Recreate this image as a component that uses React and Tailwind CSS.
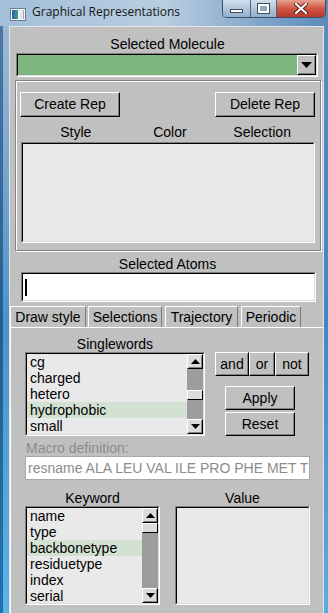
import React from "react";

const singlewords = ["cg", "charged", "hetero", "hydrophobic", "small"];
const keywords = ["name", "type", "backbonetype", "residuetype", "index", "serial"];

function Raised({ className = "", children }) {
  return (
    <div className={`border border-t-white border-l-white border-b-black border-r-black bg-[#c0c0c0] ${className}`}>
      <div className="w-full h-full border border-t-transparent border-l-transparent border-b-[#808080] border-r-[#808080] flex items-center justify-center">
        {children}
      </div>
    </div>
  );
}

function Sunken({ className = "", inner = "", children }) {
  return (
    <div className={`border border-t-[#808080] border-l-[#808080] border-b-white border-r-white ${className}`}>
      <div className={`w-full h-full border border-t-black border-l-black border-b-[#dcdcdc] border-r-[#dcdcdc] ${inner}`}>
        {children}
      </div>
    </div>
  );
}

function Arrow({ up, className = "" }) {
  return (
    <div className={`border border-t-white border-l-white border-b-black border-r-black bg-[#dcdcdc] ${className}`}>
      <div className="w-full h-full border border-t-transparent border-l-transparent border-b-[#808080] border-r-[#808080] flex items-center justify-center">
        <svg width="9" height="5" viewBox="0 0 9 5">
          {up ? <polygon points="0,5 9,5 4.5,0" fill="#000" /> : <polygon points="0,0 9,0 4.5,5" fill="#000" />}
        </svg>
      </div>
    </div>
  );
}

function Scrollbar({ before, after }) {
  return (
    <div className="w-[16px] h-full flex flex-col bg-[#9d9d9d]">
      <Arrow up className="h-[15px]" />
      <div style={{ height: before }} />
      <div className="h-[10px] border border-t-white border-l-white border-b-black border-r-black bg-[#dcdcdc]" />
      <div className="flex-1" style={{ minHeight: after }} />
      <Arrow className="h-[15px]" />
    </div>
  );
}

function ListBox({ items, selected, className, before }) {
  return (
    <Sunken className={className} inner="bg-[#e9e9e9] flex overflow-hidden">
      <div className="flex-1 flex flex-col">
        {items.map((it) => (
          <div
            key={it}
            className={`h-[16px] leading-[16px] pl-[3px] text-[14px] text-black ${it === selected ? "bg-[#d3e1d3]" : ""}`}
          >
            {it}
          </div>
        ))}
      </div>
      <Scrollbar before={before} />
    </Sunken>
  );
}

export default function App() {
  return (
    <div className="w-[328px] h-[613px] overflow-hidden flex flex-col bg-gradient-to-r from-[#a3bfda] via-[#b9cde1] to-[#5a8bbb] font-['Liberation_Sans',Arial,sans-serif]">
      {/* title bar */}
      <div className="h-[26px] flex items-start shrink-0">
        <svg className="mt-[8px] ml-[10px]" width="16" height="13" viewBox="0 0 16 13">
          <rect x="0.5" y="0.5" width="15" height="12" fill="#f4f4f4" stroke="#6b7f93" />
          <rect x="2" y="2" width="6" height="9" fill="#3f8f8c" />
          <rect x="2" y="2" width="3" height="9" fill="#2f6ea8" />
          <rect x="9" y="2" width="5" height="9" fill="#e4e9ee" />
          <rect x="13" y="2" width="1" height="9" fill="#9aa8b5" />
        </svg>
        <span className="ml-[6px] mt-[4px] leading-[16px] text-[12px] text-[#161616] font-['Open_Sans',sans-serif]">
          Graphical Representations
        </span>
        <div className="ml-auto mr-[2px] flex h-[18px] rounded-b-[5px] border border-t-0 border-[#3a4f6b] overflow-hidden">
          <div className="w-[28px] h-full bg-gradient-to-b from-[#d2dfec] to-[#93afcb] border-r border-[#4d6584] flex items-end justify-center pb-[4px]">
            <div className="w-[13px] h-[4px] bg-white border border-[#3b4b60]" />
          </div>
          <div className="w-[26px] h-full bg-gradient-to-b from-[#d2dfec] to-[#93afcb] border-r border-[#4d6584] flex items-center justify-center">
            <div className="w-[11px] h-[9px] border-[2px] border-white outline outline-1 outline-[#3b4b60] bg-[#8fa8c2]" />
          </div>
          <div className="w-[48px] h-full bg-gradient-to-b from-[#e6a192] via-[#cf5642] to-[#b9382a] flex items-center justify-center">
            <svg width="14" height="11" viewBox="0 0 14 11">
              <path d="M2 1 L12 10 M12 1 L2 10" stroke="#5a1a12" strokeWidth="4" strokeLinecap="round" />
              <path d="M2 1 L12 10 M12 1 L2 10" stroke="#fff" strokeWidth="2.2" strokeLinecap="round" />
            </svg>
          </div>
        </div>
      </div>

      <div className="flex-1 flex">
        {/* left frame */}
        <div className="w-[9px] flex shrink-0">
          <div className="w-[3px] bg-gradient-to-b from-[#4f77a3] via-[#1f5f93] to-[#1d74b0]" />
          <div className="w-[6px] bg-gradient-to-b from-[#9cb9d6] via-[#4f93c8] to-[#5fb2e3]" />
        </div>

        {/* content */}
        <div className="w-[314px] bg-[#c0c0c0] border-t border-l border-[#e4e4e4] flex flex-col text-[14px] text-black">
          <div className="mt-[9px] h-[16px] leading-[16px] text-center pl-[2px]">Selected Molecule</div>

          <Sunken className="mt-[1px] ml-[6px] w-[302px] h-[24px]" inner="bg-[#7fb67f] flex justify-end">
            <Raised className="w-[19px] h-full">
              <svg width="11" height="6" viewBox="0 0 11 6">
                <polygon points="0,0 11,0 5.5,6" fill="#000" />
              </svg>
            </Raised>
          </Sunken>

          {/* reps frame */}
          <div className="mt-[3px] ml-[5px] w-[306px] h-[171px] border border-[#858585] shadow-[inset_1px_1px_0_#fff,1px_1px_0_#fff] flex flex-col">
            <div className="mt-[11px] flex justify-between pl-[4px] pr-[5px]">
              <Raised className="w-[100px] h-[25px]">Create Rep</Raised>
              <Raised className="w-[100px] h-[25px]">Delete Rep</Raised>
            </div>
            <div className="mt-[7px] h-[16px] leading-[16px] flex">
              <span className="w-[122px] text-center">Style</span>
              <span className="w-[70px] text-center">Color</span>
              <span className="w-[118px] text-center">Selection</span>
            </div>
            <Sunken className="mt-[2px] ml-[5px] w-[294px] h-[101px]" inner="bg-[#e9e9e9]" />
          </div>

          <div className="mt-[5px] h-[16px] leading-[16px] text-center pl-[2px]">Selected Atoms</div>
          <Sunken className="ml-[11px] w-[295px] h-[30px]" inner="bg-white flex items-center pl-[2px]">
            <div className="w-[2px] h-[17px] bg-black" />
          </Sunken>

          {/* tabs */}
          <div className="mt-[4px] h-[21px] flex">
            {[
              ["Draw style", "w-[76px]", ""],
              ["Selections", "w-[74px]", "ml-[2px]"],
              ["Trajectory", "w-[73px]", "ml-[3px]"],
              ["Periodic", "w-[60px]", "ml-[3px]"],
            ].map(([t, w, m]) => (
              <div
                key={t}
                className={`${w} ${m} h-full border-t border-l border-r border-t-white border-l-white border-r-[#7a7a7a] flex items-center justify-center leading-[16px]`}
              >
                {t}
              </div>
            ))}
          </div>

          {/* selections panel */}
          <div className="flex-1 border-t border-l border-white flex flex-col">
            <div className="flex">
              <div className="ml-[14px] w-[180px] flex flex-col">
                <div className="mt-[8px] h-[16px] leading-[16px] text-center">Singlewords</div>
                <ListBox items={singlewords} selected="hydrophobic" className="h-[84px] w-[180px]" before={21} />
              </div>
              <div className="ml-[10px] mt-[24px] flex flex-col">
                <div className="flex h-[24px]">
                  <Raised className="w-[34px] h-full">and</Raised>
                  <Raised className="w-[26px] h-full">or</Raised>
                  <Raised className="w-[34px] h-full">not</Raised>
                </div>
                <Raised className="mt-[10px] ml-[10px] w-[70px] h-[24px]">Apply</Raised>
                <Raised className="mt-[2px] ml-[10px] w-[70px] h-[24px]">Reset</Raised>
              </div>
            </div>

            <div className="mt-[5px] pl-[15px] h-[15px] leading-[15px] text-[#8c8c8c]">Macro definition:</div>
            <div className="ml-[14px] w-[285px] h-[24px] bg-white border border-[#a8a8a8] overflow-hidden whitespace-nowrap pl-[2px] leading-[22px] text-[#8c8c8c]">
              resname ALA LEU VAL ILE PRO PHE MET TRP
            </div>

            <div className="mt-[10px] flex">
              <div className="ml-[14px] w-[135px] flex flex-col">
                <div className="h-[16px] leading-[16px] text-center">Keyword</div>
                <ListBox items={keywords} selected="backbonetype" className="h-[99px] w-[135px]" before={0} />
              </div>
              <div className="ml-[15px] w-[135px] flex flex-col">
                <div className="h-[16px] leading-[16px] text-center">Value</div>
                <Sunken className="h-[99px] w-[135px]" inner="bg-[#e9e9e9]" />
              </div>
            </div>
          </div>
        </div>

        {/* right frame */}
        <div className="w-[5px] flex shrink-0">
          <div className="w-[1px] bg-[#dfe7ef]" />
          <div className="w-[4px] bg-gradient-to-b from-[#5b8bbb] via-[#3f87c2] to-[#5aaedf]" />
        </div>
      </div>
    </div>
  );
}
